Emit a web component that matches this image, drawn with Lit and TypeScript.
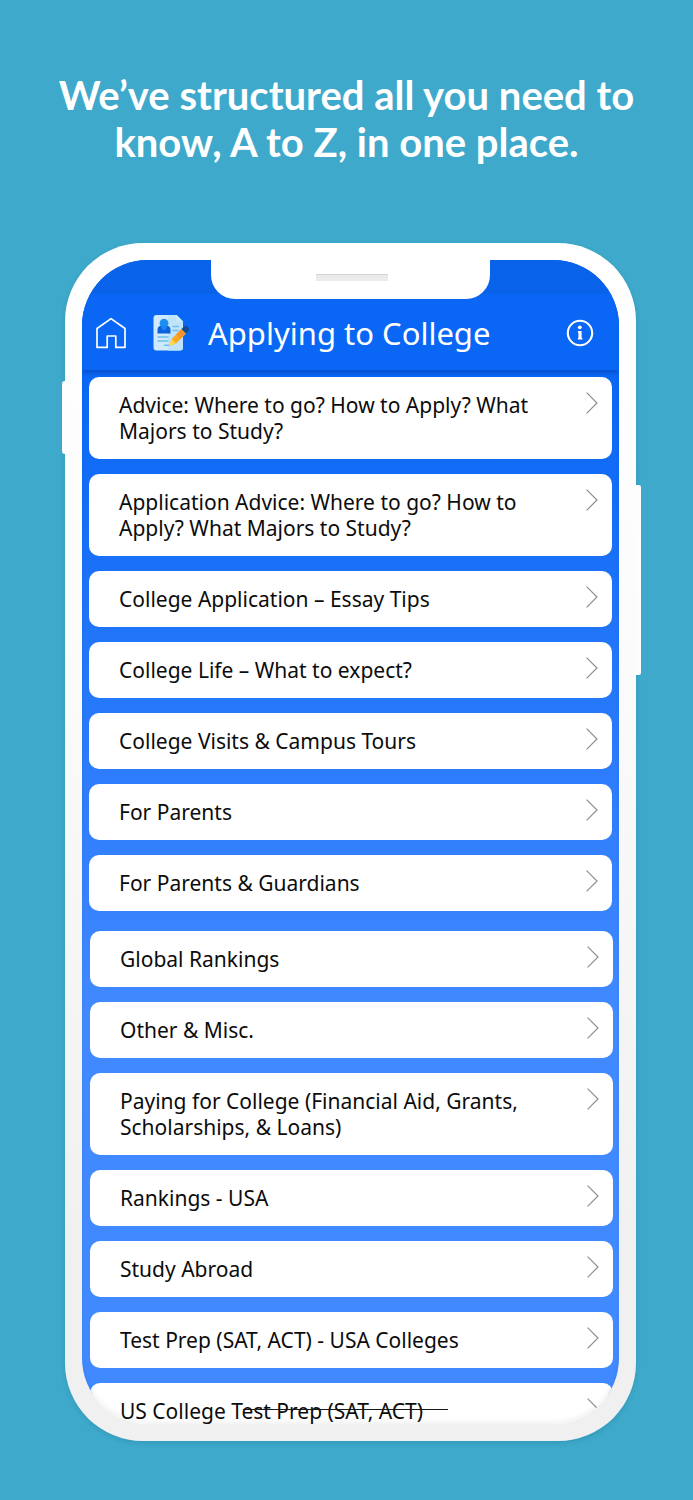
import { LitElement, html, css, svg } from "lit";
import { customElement, property } from "lit/decorators.js";
import { classMap } from "lit/directives/class-map.js";

interface Topic {
  title: string;
  struck?: boolean;
}

const FIRST_TOPICS: Topic[] = [
  { title: "Advice: Where to go? How to Apply? What Majors to Study?" },
  { title: "Application Advice: Where to go? How to Apply? What Majors to Study?" },
  { title: "College Application – Essay Tips" },
  { title: "College Life – What to expect?" },
  { title: "College Visits & Campus Tours" },
  { title: "For Parents" },
  { title: "For Parents & Guardians" },
];

const MORE_TOPICS: Topic[] = [
  { title: "Global Rankings" },
  { title: "Other & Misc." },
  { title: "Paying for College (Financial Aid, Grants, Scholarships, & Loans)" },
  { title: "Rankings - USA" },
  { title: "Study Abroad" },
  { title: "Test Prep (SAT, ACT) - USA Colleges" },
  { title: "US College Test Prep (SAT, ACT)", struck: true },
];

const homeIcon = svg`<svg class="home" viewBox="0 0 32 32" aria-hidden="true">
  <path d="M2 30.400V11.500L16 1.600l14 9.900v18.900h-9.200V19h-8.600v11.400z" fill="none" stroke="#fff" stroke-width="1.700" stroke-linejoin="round"/>
</svg>`;

const formIcon = svg`<svg class="form" viewBox="0 0 36 36" aria-hidden="true">
  <path d="M3.500 0H23.500l6.500 6.500v26a3 3 0 0 1-3 3H3.500a3 3 0 0 1-3-3V3a3 3 0 0 1 3-3z" fill="#cfeafd"/>
  <path d="M15 0h8.500l6.500 6.500v26a3 3 0 0 1-3 3H15z" fill="#bfe3fa"/>
  <path d="M23.500 0l6.500 6.500h-5a1.500 1.500 0 0 1-1.500-1.500z" fill="#cdeafc"/>
  <path d="M4.500 18.500v-3.500a4.500 4.500 0 0 1 4-4.400h5a4.500 4.500 0 0 1 4 4.400v3.500z" fill="#0b62dc"/>
  <circle cx="11" cy="8.200" r="4.400" fill="#1a90f5"/>
  <path d="M8 10.500h6l-1 3.500-2 1.500-2-1.500z" fill="#1a86ee"/>
  <path d="M20 11.500h5.500M20 15.500h5M5 22h10M5 26h10M11.500 30.200h4" stroke="#6fc0ee" stroke-width="1.500" stroke-linecap="round"/>
  <path d="M16 31l2.500-7L28.500 14l4.500 4.500L23 28.500z" fill="#fba922"/>
  <path d="M16 31l2.500-7 4.500 4.500z" fill="#ffd84a"/>
  <path d="M28.500 14l4.500 4.500-5.500 5.500-4.500-4.500z" fill="#f9932b"/>
  <path d="M28.500 14l2-2a2.900 2.900 0 0 1 4.300.2 2.900 2.900 0 0 1 .2 4.300l-2 2z" fill="#174a91"/>
</svg>`;

const infoIcon = svg`<svg class="info" viewBox="0 0 28 28" aria-hidden="true">
  <circle cx="14" cy="14" r="12.200" fill="none" stroke="#fff" stroke-width="2.100"/>
  <circle cx="13.800" cy="8.300" r="1.900" fill="#fff"/>
  <path d="M11.900 12h3.700v7h.8v1.500h-4.500V19h.5v-5.500h-.5z" fill="#fff"/>
</svg>`;

const chevron = svg`<svg class="chevron" viewBox="0 0 12 22" aria-hidden="true">
  <path d="M.6.600L11 11 .6 21.400" fill="none" stroke="#8e8e8e" stroke-width="1.200"/>
</svg>`;

@customElement("topic-list")
export class TopicList extends LitElement {
  @property({ attribute: false }) topics: Topic[] = [];

  static styles = css`
    :host {
      display: block;
    }
    .list {
      display: flex;
      flex-direction: column;
      gap: 15px;
      margin: 0;
      padding: 0;
      list-style: none;
    }
    .card {
      position: relative;
      display: flex;
      justify-content: space-between;
      padding: 15px 14px 15px 30px;
      border-radius: 10px;
      background: #fff;
      color: #0c0c0c;
      font-size: 21px;
      line-height: 26px;
      text-decoration: none;
    }
    .title {
      max-width: 424px;
    }
    .chevron {
      flex: none;
      width: 12px;
      height: 22px;
    }
    .struck::after {
      content: "";
      position: absolute;
      left: 153px;
      top: 26px;
      width: 205px;
      height: 1px;
      background: #1a1a1a;
    }
  `;

  render() {
    return html`<ul class="list">
      ${this.topics.map(
        (t) => html`<li>
          <a class=${classMap({ card: true, struck: !!t.struck })} href="#">
            <span class="title">${t.title}</span>${chevron}
          </a>
        </li>`
      )}
    </ul>`;
  }
}

@customElement("app-root")
export class AppRoot extends LitElement {
  static styles = css`
    :host {
      display: block;
      box-sizing: border-box;
      min-height: 100vh;
      padding: 72px 57px 59px 65px;
      background: #3ea9ca;
      font-family: "Noto Sans", "Open Sans", sans-serif;
    }
    .headline {
      margin: 0 -20px 77px -28px;
      color: #fff;
      font-family: Lato, sans-serif;
      font-size: 40px;
      font-weight: 700;
      line-height: 47px;
      text-align: center;
    }
    .phone {
      position: relative;
      padding: 17px;
      border-radius: 78px;
      background: linear-gradient(#fff, #fbfbfb 35%, #f0f0f0 85%);
      box-shadow: 0 2px 5px rgba(0, 60, 90, 0.14);
    }
    .side {
      position: absolute;
      background: #fdfdfd;
    }
    .volume {
      left: -3px;
      top: 138px;
      width: 3px;
      height: 73px;
      border-radius: 3px 0 0 3px;
    }
    .power {
      right: -5px;
      top: 242px;
      width: 5px;
      height: 190px;
      border-radius: 0 2px 2px 0;
    }
    .screen {
      position: relative;
      overflow: hidden;
      border-radius: 66px;
      background: linear-gradient(#0a67f5 10%, #4189ff 65%, #4189ff calc(100% - 30px), #fff calc(100% - 30px));
    }
    .screen::after {
      content: "";
      position: absolute;
      inset: 0;
      border-radius: 66px;
      box-shadow: inset 0 -3px 4px rgba(0, 0, 0, 0.05);
      pointer-events: none;
    }
    .status {
      display: flex;
      justify-content: center;
      height: 34px;
      background: #0963ea;
    }
    .notch {
      display: flex;
      justify-content: center;
      z-index: 1;
      width: 279px;
      height: 39px;
      border-radius: 0 0 24px 24px;
      background: #fff;
    }
    .speaker {
      width: 72px;
      height: 7px;
      margin: 14px 0 0 2px;
      background: #ebebeb;
      box-shadow: inset 0 1px 1px #d2d2d2;
    }
    .bar {
      display: flex;
      align-items: center;
      box-sizing: border-box;
      height: 76px;
      padding: 2px 25px 0 13px;
      background: #0a67f5;
      box-shadow: 0 4px 4px -1px rgba(0, 20, 90, 0.25);
    }
    .icon-button {
      display: flex;
      padding: 0;
      border: 0;
      background: none;
    }
    .home {
      width: 32px;
      height: 32px;
    }
    .form {
      width: 36px;
      height: 36px;
      margin-left: 26px;
    }
    .info {
      width: 28px;
      height: 28px;
    }
    .title {
      flex: 1;
      margin: 0 0 0 19px;
      color: #fff;
      font-size: 31px;
      font-weight: 400;
      line-height: 40px;
    }
    .topics {
      display: flex;
      flex-direction: column;
      gap: 20px;
      margin-bottom: -15px;
      padding: 7px 0 0;
    }
    .first {
      padding: 0 7px;
    }
    .more {
      padding: 0 6px 0 8px;
    }
  `;

  render() {
    return html`
      <h1 class="headline">We’ve structured all you need to<br />know, A to Z, in one place.</h1>
      <main class="phone">
        <span class="side volume"></span>
        <span class="side power"></span>
        <div class="screen">
          <div class="status"><div class="notch"><span class="speaker"></span></div></div>
          <header class="bar">
            <button class="icon-button" aria-label="Home">${homeIcon}</button>
            ${formIcon}
            <h2 class="title">Applying to College</h2>
            <button class="icon-button" aria-label="Information">${infoIcon}</button>
          </header>
          <nav class="topics">
            <topic-list class="first" .topics=${FIRST_TOPICS}></topic-list>
            <topic-list class="more" .topics=${MORE_TOPICS}></topic-list>
          </nav>
        </div>
      </main>
    `;
  }
}
